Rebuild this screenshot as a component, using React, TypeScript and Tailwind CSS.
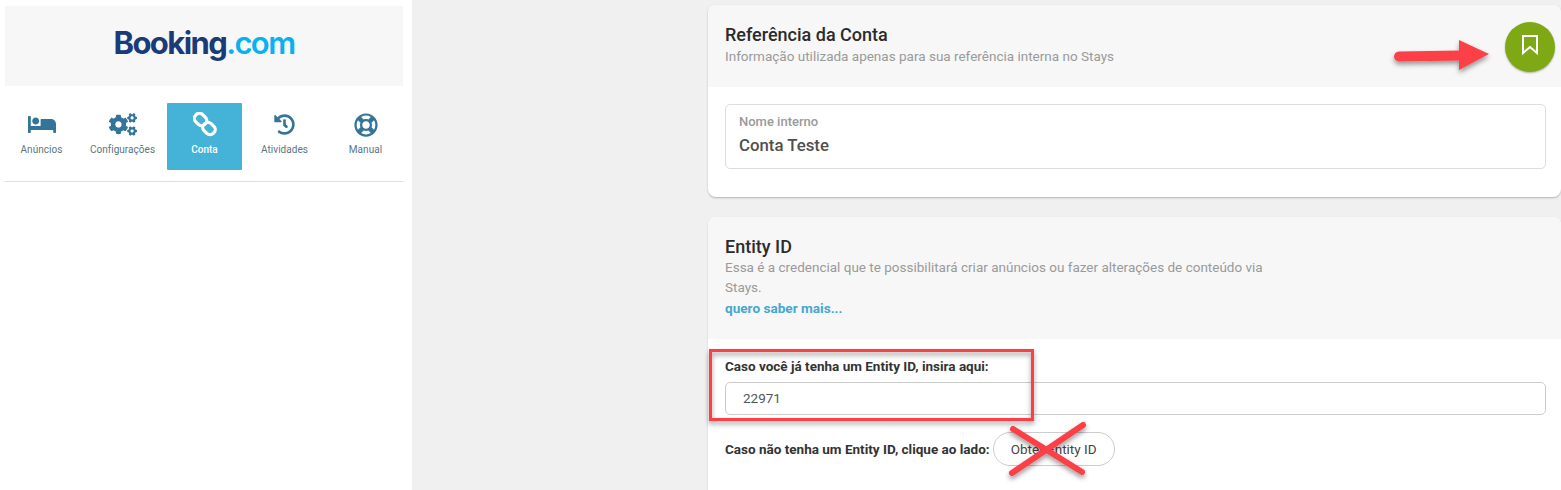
import { FaBed, FaCogs, FaHistory, FaRegLifeRing } from "react-icons/fa";

// chain icon runs top-left to bottom-right, the packaged ones go the other way
function ChainIcon() {
  return (
    <svg className="w-[24px] h-[25px]" viewBox="0 0 24 25" fill="none" stroke="currentColor" strokeWidth="3.2">
      <rect x="1" y="2.5" width="13" height="10" rx="4.5" transform="rotate(45 7.5 7.5)" />
      <rect x="9.5" y="11.5" width="13" height="10" rx="4.5" transform="rotate(45 16 16.5)" />
    </svg>
  );
}

function BookmarkIcon() {
  return (
    <svg className="w-[18px] h-[21px] mb-[5px]" viewBox="0 0 18 21" fill="none" stroke="currentColor" strokeWidth="2">
      <path d="M2 2 H16 V19 L9 13 L2 19 Z" />
    </svg>
  );
}

const navItems = [
  { label: "Anúncios", icon: <FaBed className="w-[28px] h-[25px]" /> },
  { label: "Configurações", icon: <FaCogs className="w-[28px] h-[25px]" /> },
  { label: "Conta", icon: <ChainIcon />, active: true },
  { label: "Atividades", icon: <FaHistory className="w-[21px] h-[21px]" /> },
  { label: "Manual", icon: <FaRegLifeRing className="w-[24px] h-[24px]" /> },
];

function Sidebar() {
  return (
    <aside className="w-[412px] shrink-0 bg-white pl-[5px] pr-[9px] pt-[6px]">
      <div className="h-[80px] bg-[#f7f7f7] flex items-center justify-center">
        <span className="font-['Inter',sans-serif] text-[31px] tracking-[-1.6px] leading-none pb-[7px]">
          <span className="text-[#1b3a78] font-bold">Booking</span>
          <span className="text-[#0ab0ef] font-semibold">.com</span>
        </span>
      </div>
      <nav className="flex ml-[-4px] w-[406px] mt-[17px]">
        {navItems.map((item) => (
          <a key={item.label} href="#" className="w-[81px] shrink-0 flex justify-center">
            <span
              className={
                item.active
                  ? "w-[75px] ml-[2px] h-[67px] bg-[#44b3d7] text-white flex flex-col items-center pt-[9px] rounded-[1px]"
                  : "w-full h-[67px] text-[#33749b] flex flex-col items-center pt-[9px]"
              }
            >
              <span className="h-[25px] flex items-center justify-center">{item.icon}</span>
              <span
                className={
                  item.active
                    ? "text-[10px] font-medium leading-none mt-[8px] text-white"
                    : "text-[10px] leading-none mt-[8px] text-[#5a7586] tracking-[0.03px]"
                }
              >
                {item.label}
              </span>
            </span>
          </a>
        ))}
      </nav>
      <div className="h-px bg-[#dddddd] mt-[11px]" />
    </aside>
  );
}

function AccountCard() {
  return (
    <section className="relative h-[192px] bg-white rounded-[8px] shadow-[0_1px_2px_rgba(0,0,0,0.25)]">
      <div className="h-[82px] bg-[#f7f7f7] rounded-t-[8px] px-[17px] pt-[19px]">
        <h2 className="text-[18px] font-medium leading-[22px] text-[#2b2b2b]">Referência da Conta</h2>
        <p className="text-[13.5px] leading-[20px] text-[#9a9a9a]">
          Informação utilizada apenas para sua referência interna no Stays
        </p>
      </div>
      <div className="ml-[17px] mr-[15px] mt-[17px] h-[65px] border border-[#dddddd] rounded-[5px] px-[13px] pt-[9px]">
        <div className="text-[13px] font-medium leading-[16px] text-[#9a9a9a]">Nome interno</div>
        <div className="text-[16.8px] font-medium leading-[22px] text-[#505050] mt-[4px]">Conta Teste</div>
      </div>
      <button className="absolute right-[6px] top-[17px] w-[50px] h-[50px] rounded-full bg-[#7fa914] text-white flex items-center justify-center shadow-[0_1px_2px_rgba(0,0,0,0.3)]">
        <BookmarkIcon />
      </button>
    </section>
  );
}

function EntityCard() {
  return (
    <section className="h-[400px] bg-white rounded-t-[8px] mt-[20px] shadow-[0_1px_2px_rgba(0,0,0,0.15)]">
      <div className="h-[122px] bg-[#f7f7f7] rounded-t-[8px] px-[17px] pt-[19px]">
        <h2 className="text-[18px] font-medium leading-[22px] text-[#2b2b2b]">Entity ID</h2>
        <p className="text-[13.5px] leading-[19.5px] text-[#9a9a9a] w-[560px]">
          Essa é a credencial que te possibilitará criar anúncios ou fazer alterações de conteúdo via Stays.
        </p>
        <a href="#" className="text-[13.6px] font-bold leading-[20px] text-[#44a8d0] block mt-[1px]">quero saber mais...</a>
      </div>
      <div className="pl-[17px] pr-[15px] pt-[18px]">
        <label className="block text-[13.5px] font-bold leading-[18px] text-[#333333]">
          Caso você já tenha um Entity ID, insira aqui:
        </label>
        <div className="mt-[7px] h-[33px] border border-[#cccccc] rounded-[5px] flex items-center pl-[17px] text-[13.5px] text-[#555555]">
          22971
        </div>
        <div className="flex items-center mt-[17px] h-[34px]">
          <span className="text-[13.5px] font-bold text-[#333333]">Caso não tenha um Entity ID, clique ao lado:</span>
          <button className="ml-[3px] w-[122px] h-[34px] border border-[#cccccc] rounded-full text-[13.5px] text-[#444444]">
            Obter Entity ID
          </button>
        </div>
      </div>
    </section>
  );
}

// red annotations painted on top of the screenshot
function Annotations() {
  return (
    <svg
      className="absolute inset-0 pointer-events-none"
      width="1561"
      height="490"
      viewBox="0 0 1561 490"
      fill="none"
    >
      <defs>
        <filter id="sh" x="-20%" y="-40%" width="140%" height="180%">
          <feDropShadow dx="0" dy="3" stdDeviation="2.5" floodColor="#000" floodOpacity="0.4" />
        </filter>
      </defs>
      <g filter="url(#sh)">
        <path d="M1399 56.5 L1460 55.5" stroke="#fb4046" strokeWidth="10" strokeLinecap="round" />
        <path d="M1459 40 L1489 54 L1459 70 Z" fill="#fb4046" />
      </g>
      <rect x="710.5" y="350.5" width="322" height="69" stroke="#fb4046" strokeWidth="3" filter="url(#sh)" />
      <g filter="url(#sh)" stroke="#fb4046" strokeWidth="6" strokeLinecap="round">
        <path d="M1013 429 L1082 472" />
        <path d="M1083 425 L1012 473" />
      </g>
    </svg>
  );
}

export default function App() {
  return (
    <div className="relative w-[1561px] h-[490px] overflow-hidden flex bg-[#f0f0f0] font-['Roboto',sans-serif]">
      <Sidebar />
      <main className="flex-1 pl-[296px] pt-[5px]">
        <AccountCard />
        <EntityCard />
      </main>
      <Annotations />
    </div>
  );
}
